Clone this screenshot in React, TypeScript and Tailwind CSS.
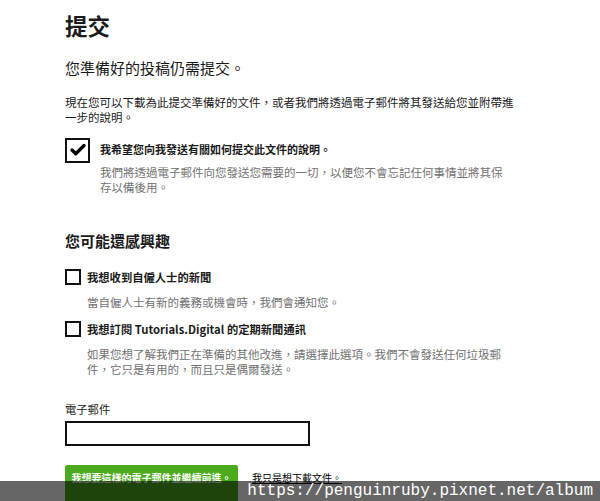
import { Check } from 'lucide-react'

const font = { fontFamily: '"Noto Sans CJK TC", "Noto Sans", sans-serif' }

function Box({ checked, big }: { checked?: boolean; big?: boolean }) {
  return (
    <div
      className={`shrink-0 border-2 border-[#111] bg-white flex items-center justify-center ${
        big ? 'w-[25px] h-[25px]' : 'w-4 h-4'
      }`}
    >
      {checked && <Check className="w-[18px] h-[18px] text-black" strokeWidth={4.5} />}
    </div>
  )
}

export default function App() {
  return (
    <div className="relative w-[600px] h-[501px] overflow-hidden bg-white text-[#1b1b1b]" style={font}>
      <div className="pl-[65px]">
        <h1 className="mt-[11px] text-[22.5px] leading-[28px] font-bold">提交</h1>
        <p className="mt-[19px] text-[15px] leading-[20px]">您準備好的投稿仍需提交。</p>
        <p className="mt-[17px] w-[455px] text-[11.5px] leading-[15px]">
          現在您可以下載為此提交準備好的文件，或者我們將透過電子郵件將其發送給您並附帶進一步的說明。
        </p>

        {/* instructions checkbox */}
        <div className="mt-[12.5px] flex items-start gap-[10px]">
          <Box checked big />
          <div className="pt-[4.5px]">
            <p className="text-[11px] leading-[15px] font-bold">我希望您向我發送有關如何提交此文件的說明。</p>
            <p className="mt-[8px] w-[408px] text-[11.5px] leading-[15px] text-[#727272]">
              我們將透過電子郵件向您發送您需要的一切，以便您不會忘記任何事情並將其保存以備後用。
            </p>
          </div>
        </div>

        <h2 className="mt-[36px] text-[15px] leading-[20px] font-bold">您可能還感興趣</h2>

        <div className="mt-[18px]">
          <div className="flex items-center gap-[6px]">
            <Box />
            <span className="text-[11.3px] leading-[15px] font-bold">我想收到自僱人士的新聞</span>
          </div>
          <p className="mt-[9.5px] pl-[22px] text-[11.5px] leading-[15px] text-[#727272]">
            當自僱人士有新的義務或機會時，我們會通知您。
          </p>

          <div className="mt-[11.5px] flex items-center gap-[6px]">
            <Box />
            <span className="text-[11.3px] leading-[15px] font-bold">我想訂閱 Tutorials.Digital 的定期新聞通訊</span>
          </div>
          <p className="mt-[9.5px] ml-[22px] w-[420px] text-[11.5px] leading-[15px] text-[#727272]">
            如果您想了解我們正在準備的其他改進，請選擇此選項。我們不會發送任何垃圾郵件，它只是有用的，而且只是偶爾發送。
          </p>
        </div>

        <label className="block mt-[25px] text-[11.3px] leading-[15px]">電子郵件</label>
        <input className="block mt-[4.5px] w-[245px] h-[25px] border-2 border-[#111] bg-white outline-none" />

        <div className="mt-[19px] flex items-start gap-[14px]">
          <button className="h-[40px] w-[173px] rounded-[2px] bg-[#4bab1d] pt-[7px] text-[10px] leading-[12px] font-bold text-white flex justify-center items-start">
            我想要這樣的電子郵件並繼續前進。
          </button>
          <a className="pt-[7px] text-[10px] leading-[12px] text-black underline">我只是想下載文件。</a>
        </div>
      </div>

      {/* watermark strip */}
      <div className="absolute left-0 right-0 bottom-0 h-[20px] bg-black/60 flex items-center justify-end pr-[7px]">
        <span className="text-white text-[16px] leading-[20px]" style={{ fontFamily: '"Liberation Mono", monospace' }}>
          https://penguinruby.pixnet.net/album
        </span>
      </div>
    </div>
  )
}
